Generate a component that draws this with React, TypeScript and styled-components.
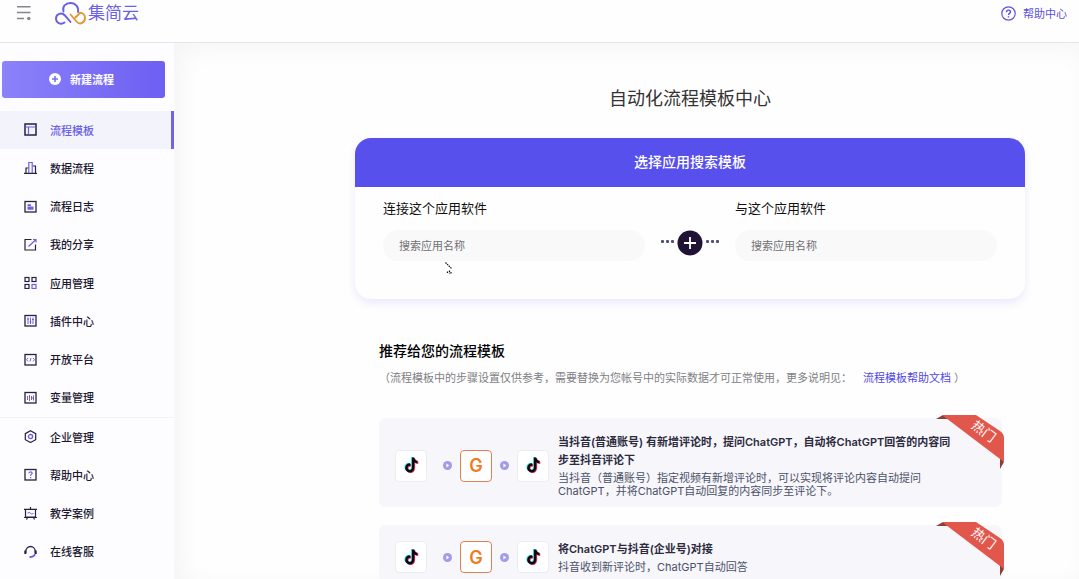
import React from 'react';
import styled, { createGlobalStyle } from 'styled-components';

const INK = '#25213f';
const VIOLET = '#6a5fe6';

const GlobalStyle = createGlobalStyle`
  *, *::before, *::after { box-sizing: border-box; }
  html, body { margin: 0; background: #fefefe; overflow: hidden; }
  body {
    font-family: Inter, "Noto Sans CJK SC", sans-serif;
    font-size: 11px;
    color: #25213f;
  }
  h1, h2, h3, p, ul, ol { margin: 0; padding: 0; }
  ul, ol { list-style: none; }
  button, input { font: inherit; }
  svg { display: block; flex: none; }
`;

const Page = styled.div`
  display: flex;
  flex-direction: column;
  height: 100vh;
`;

const Header = styled.header`
  display: flex;
  align-items: center;
  height: 43px;
  padding: 0 12px 16px 16px;
  border-bottom: 1px solid #e6e6e8;
  flex: none;
`;

const IconButton = styled.button`
  display: flex;
  padding: 0;
  border: 0;
  background: none;
  cursor: pointer;
`;

const Logo = styled.a`
  display: flex;
  align-items: center;
  gap: 2px;
  margin-left: 23px;
  font-size: 17px;
  line-height: 26px;
  font-weight: 400;
  color: ${VIOLET};
  text-decoration: none;
`;

const HelpLink = styled.a`
  display: flex;
  align-items: center;
  gap: 7px;
  margin-left: auto;
  color: #5b50e0;
  text-decoration: none;
`;

const Body = styled.div`
  display: flex;
  flex: 1;
  min-height: 0;
`;

const Sidebar = styled.aside`
  display: flex;
  flex-direction: column;
  width: 174px;
  flex: none;
  padding: 18px 0 8px;
  background: #fdfdff;
`;

const CreateButton = styled.button`
  display: flex;
  align-items: center;
  justify-content: center;
  gap: 9px;
  height: 37px;
  flex: none;
  margin: 0 9px 13px 2px;
  padding: 0 4px 1px 0;
  border: 0;
  border-radius: 3px;
  background: linear-gradient(90deg, #8c82fa, #6c5ff2);
  color: #fff;
  font-weight: 700;
  cursor: pointer;
`;

const Menu = styled.ul`
  display: flex;
  flex-direction: column;
  flex: 1;
`;

const MenuItem = styled.li<{ $divided?: boolean }>`
  display: flex;
  flex: 1;
  border-top: ${(p) => (p.$divided ? '1px solid #f3f3f6' : '0')};
`;

const MenuLink = styled.a<{ $active?: boolean }>`
  display: flex;
  align-items: center;
  gap: 13px;
  flex: 1;
  padding: 0 0 1px 24px;
  border-right: 3px solid ${(p) => (p.$active ? '#7063e6' : 'transparent')};
  background: ${(p) => (p.$active ? '#f3f3fc' : 'transparent')};
  color: ${(p) => (p.$active ? VIOLET : '#1b1830')};
  font-weight: 500;
  text-decoration: none;
`;

const Main = styled.main`
  flex: 1;
  min-width: 0;
  overflow: hidden;
  padding: 41px 54px 0 181px;
  box-shadow: inset 8px 6px 24px rgba(0, 0, 0, 0.04);
`;

const PageTitle = styled.h1`
  font-size: 18px;
  line-height: 30px;
  font-weight: 400;
  text-align: center;
  color: #333;
`;

const SearchCard = styled.section`
  margin-top: 24px;
  border-radius: 16px;
  background: #fefefe;
  box-shadow: 0 4px 8px rgba(88, 80, 236, 0.12);
`;

const SearchHead = styled.h2`
  padding-bottom: 2px;
  border-radius: 16px 16px 0 0;
  background: #5850ec;
  color: #fff;
  font-size: 14px;
  line-height: 47px;
  font-weight: 500;
  text-align: center;
`;

const SearchBody = styled.div`
  display: flex;
  align-items: flex-end;
  padding: 12px 28px 38px;
`;

const Field = styled.label`
  display: flex;
  flex-direction: column;
  gap: 12px;
  flex: 1;
  min-width: 0;
  font-size: 13px;
  line-height: 19px;
  color: #111;
`;

const FieldInput = styled.input`
  width: 100%;
  height: 31px;
  padding: 0 16px;
  border: 0;
  border-radius: 16px;
  background: #f9f9fa;
  color: #333;
  font-size: 11px;
  &::placeholder { color: #707074; opacity: 1; }
`;

const Joiner = styled.div`
  display: flex;
  align-items: center;
  justify-content: center;
  width: 90px;
  height: 37px;
  flex: none;
`;

const Recommended = styled.section`
  padding: 0 23px 0 24px;
`;

const SectionTitle = styled.h2`
  margin-top: 41px;
  font-size: 14px;
  line-height: 22px;
  font-weight: 500;
  color: #000;
`;

const Note = styled.p`
  display: flex;
  margin-top: 7px;
  line-height: 18px;
  white-space: nowrap;
  color: #808085;
`;

const NoteLink = styled.a`
  margin: 0 3px 0 11px;
  color: #5046e5;
  text-decoration: none;
`;

const TemplateList = styled.ul`
  display: flex;
  flex-direction: column;
  gap: 18px;
  margin-top: 31px;
`;

const TemplateCard = styled.li`
  position: relative;
  display: flex;
  align-items: center;
  gap: 9px;
  padding: 15px 41px 9px 16px;
  border-radius: 7px;
  background: #f6f6fb;
`;

const Apps = styled.div`
  display: flex;
  align-items: center;
  gap: 8px;
  flex: none;
`;

const AppTile = styled.div<{ $tone: string }>`
  display: flex;
  align-items: center;
  justify-content: center;
  width: 32px;
  height: 32px;
  border: 1px solid ${(p) => p.$tone};
  border-radius: 4px;
  background: #fff;
  color: #f07a1c;
  font-family: Inter, sans-serif;
  font-size: 18px;
  font-weight: 600;
`;

const FirstTile = styled(AppTile)`
  margin-right: 8px;
`;

const TemplateText = styled.div`
  display: flex;
  flex-direction: column;
  gap: 3px;
  flex: 1;
  min-width: 0;
`;

const TemplateTitle = styled.h3`
  font-size: 11px;
  line-height: 18px;
  font-weight: 600;
  color: #2c2a3c;
`;

const TemplateDesc = styled.p`
  line-height: 13px;
  color: #4d5268;
`;

const Ribbon = styled.div`
  position: absolute;
  top: -3px;
  right: -2px;
  width: 68px;
  height: 54px;
`;

const RibbonText = styled.span`
  position: absolute;
  top: 8px;
  left: 35px;
  font-size: 13px;
  line-height: 16px;
  color: #fff;
  transform: rotate(37deg);
`;

const Pointer = styled.svg`
  position: absolute;
  left: 445px;
  top: 262px;
`;

function TikTok() {
  const note =
    'M12.5 2h3.1c.2 2.3 1.6 3.9 4 4.1v3.1c-1.5 0-2.8-.5-4-1.3v6.6c0 4-2.6 6.3-5.8 6.3A5.8 5.8 0 0 1 4 15c0-3.500 2.900-6 6.500-5.700v3.200c-1.900-.4-3.300.7-3.300 2.400a2.600 2.600 0 0 0 2.700 2.700c1.600 0 2.600-1.100 2.600-3z';
  return (
    <svg width="19" height="19" viewBox="0 0 24 24">
      <path d={note} fill="#35e0e2" transform="translate(-1 -.8)" />
      <path d={note} fill="#f0355a" transform="translate(1 .8)" />
      <path d={note} fill="#0b0b12" />
    </svg>
  );
}

function Arrow() {
  return (
    <svg width="9" height="9" viewBox="0 0 9 9">
      <circle cx="4.5" cy="4.5" r="4.5" fill="#a39be8" />
      <path d="M3.400 2.600 6.300 4.500 3.400 6.400z" fill="#fff" />
    </svg>
  );
}

const frame = <rect x="1" y="1.500" width="11" height="10.500" stroke={INK} strokeWidth="1.300" />;

const icons: Record<string, React.ReactNode> = {
  template: (
    <>
      <rect x="1" y="1" width="11" height="11" stroke={INK} strokeWidth="1.500" />
      <path d="M1.500 4h10M4.500 4v7.500" stroke={VIOLET} strokeWidth="1.200" />
    </>
  ),
  chart: (
    <>
      <path d="M2 12V7h2.500M9 5h2.500v7M0 12.300h13" stroke={INK} strokeWidth="1.200" />
      <path d="M4.800 12V1.500h3.400V12" stroke={VIOLET} strokeWidth="1.200" />
    </>
  ),
  log: (
    <>
      {frame}
      <path d="M3.500 5.200h3.500M3.500 7.300h6M3.500 8.800h6" stroke={VIOLET} strokeWidth="1.800" />
    </>
  ),
  share: (
    <>
      <path d="M7.500 1.500H1v10.500h10.500V6.500" stroke={INK} strokeWidth="1.200" />
      <path d="M4.500 8.500 11.500 2M9 1.500h3v3" stroke={VIOLET} strokeWidth="1.200" />
    </>
  ),
  apps: (
    <>
      <rect x="1" y="1.500" width="4" height="4" stroke={INK} strokeWidth="1.200" />
      <rect x="8" y="1.500" width="4" height="4" stroke={INK} strokeWidth="1.200" />
      <rect x="1" y="8.500" width="4" height="4" stroke={INK} strokeWidth="1.200" />
      <rect x="8" y="8.500" width="4" height="4" stroke={VIOLET} strokeWidth="1.200" />
    </>
  ),
  plugin: (
    <>
      {frame}
      <path d="M4 3.500v6.500M6.500 3.500v6.500M9 3.500v6.500M3 5h2M5.500 8h2M8 5.500h2" stroke={VIOLET} />
    </>
  ),
  platform: (
    <>
      {frame}
      <path d="M4 5 2.500 6.700 4 8.400M9 5l1.500 1.700L9 8.400M7 5 6 8.400" stroke={VIOLET} />
    </>
  ),
  variable: (
    <>
      {frame}
      <path d="M3.500 5v4M5.500 4v6M7.500 5v4M9.500 4.500v5M7.500 7h2" stroke={VIOLET} />
    </>
  ),
  company: (
    <>
      <path d="m6.500.800 5.200 2.900v6L6.500 12.500 1.300 9.700v-6z" stroke={INK} strokeWidth="1.200" />
      <circle cx="6.500" cy="6.600" r="2.100" stroke={VIOLET} strokeWidth="1.300" />
    </>
  ),
  help: (
    <>
      {frame}
      <path d="M5 5.300C5 3.300 8.200 3.400 8.200 5.200 8.200 6.300 6.600 6.400 6.600 7.800M6.600 9v1.200" stroke={VIOLET} strokeWidth="1.200" />
    </>
  ),
  cases: (
    <>
      <path d="M6.500 0v2M0 2.300h13M1.500 2.500v7.500h10V2.500M0 10.500h13M3.500 10.500 2.500 12.500M9.500 10.500l1 2" stroke={INK} strokeWidth="1.200" />
      <path d="m3.500 6 2-.5L7.500 7l2-.5" stroke={VIOLET} />
    </>
  ),
  service: (
    <>
      <path d="M1.800 8V6.200a4.700 4.700 0 0 1 9.400 0V8" stroke={INK} strokeWidth="1.300" />
      <path d="M1.300 5.500v3.500M11.700 5.500v3.500" stroke={INK} strokeWidth="2" />
      <path d="M11 9c-.5 2-2 3-5.500 3" stroke={VIOLET} strokeWidth="1.800" />
    </>
  ),
};

const menu = [
  { icon: 'template', label: '流程模板', active: true },
  { icon: 'chart', label: '数据流程' },
  { icon: 'log', label: '流程日志' },
  { icon: 'share', label: '我的分享' },
  { icon: 'apps', label: '应用管理' },
  { icon: 'plugin', label: '插件中心' },
  { icon: 'platform', label: '开放平台' },
  { icon: 'variable', label: '变量管理' },
  { icon: 'company', label: '企业管理', divided: true },
  { icon: 'help', label: '帮助中心' },
  { icon: 'cases', label: '教学案例' },
  { icon: 'service', label: '在线客服' },
];

const templates = [
  {
    title: '当抖音(普通账号) 有新增评论时，提问ChatGPT，自动将ChatGPT回答的内容同步至抖音评论下',
    desc: '当抖音（普通账号）指定视频有新增评论时，可以实现将评论内容自动提问ChatGPT，并将ChatGPT自动回复的内容同步至评论下。',
  },
  {
    title: '将ChatGPT与抖音(企业号)对接',
    desc: '抖音收到新评论时，ChatGPT自动回答',
  },
];

export default function App() {
  return (
    <Page lang="zh-CN">
      <GlobalStyle />
      <Header>
        <IconButton type="button" aria-label="菜单">
          <svg width="16" height="16" viewBox="0 0 16 16" fill="none" stroke="#85858a" strokeWidth="1.600">
            <path d="M1 1.800h13.500M1 7.500h13.500M1 13.500h7" />
            <circle cx="12.800" cy="13.500" r="1.700" fill="#85858a" stroke="none" />
          </svg>
        </IconButton>
        <Logo href="#">
          <svg width="31" height="24" viewBox="0 0 31 24" fill="none" strokeWidth="1.900" strokeLinecap="round">
            <path d="M8.500 10.500C7 5.500 10.500 2 15.500 2s8.500 4 7.500 9" stroke={VIOLET} />
            <path d="M9.500 21.500C5.500 24.500 1 21.500 1 17.500 1 13 6.500 10.500 10 14.500L15.500 21" stroke={VIOLET} />
            <path d="M15.500 13.500 21.500 20.500c3.500 4 8.500 1 8.500-3.500 0-3-2.200-5.200-5-5.200L20.500 16.500" stroke="#e8962e" />
          </svg>
          集简云
        </Logo>
        <HelpLink href="#">
          <svg width="15" height="15" viewBox="0 0 15 15" fill="none" stroke="#5b50e0" strokeWidth="1.200">
            <circle cx="7.500" cy="7.500" r="6.700" />
            <path d="M5.500 6.200c0-2.800 4-2.600 4-.3C9.500 7.400 7.500 7.400 7.500 9M7.500 10.300v1.300" strokeWidth="1.400" />
          </svg>
          帮助中心
        </HelpLink>
      </Header>
      <Body>
        <Sidebar>
          <CreateButton type="button">
            <svg width="12" height="12" viewBox="0 0 12 12">
              <circle cx="6" cy="6" r="6" fill="#fff" />
              <path d="M3 6h6M6 3v6" stroke="#7a6ff5" strokeWidth="1.600" />
            </svg>
            新建流程
          </CreateButton>
          <Menu>
            {menu.map((m) => (
              <MenuItem key={m.label} $divided={m.divided}>
                <MenuLink href="#" $active={m.active}>
                  <svg width="13" height="13" viewBox="0 0 13 13" fill="none">
                    {icons[m.icon]}
                  </svg>
                  {m.label}
                </MenuLink>
              </MenuItem>
            ))}
          </Menu>
        </Sidebar>
        <Main>
          <PageTitle>自动化流程模板中心</PageTitle>
          <SearchCard>
            <SearchHead>选择应用搜索模板</SearchHead>
            <SearchBody>
              <Field>
                连接这个应用软件
                <FieldInput type="text" placeholder="搜索应用名称" />
              </Field>
              <Joiner>
                <svg width="60" height="26" viewBox="0 0 60 26">
                  <g fill="#4d5078">
                    {[2.5, 7.5, 12.5, 47.5, 52.5, 57.5].map((x) => (
                      <rect key={x} x={x - 1.5} y="10" width="3" height="3" rx="1" />
                    ))}
                  </g>
                  <circle cx="30" cy="13" r="12.500" fill="#1f1235" />
                  <path d="M24 13h12M30 7v12" stroke="#fff" strokeWidth="1.800" />
                </svg>
              </Joiner>
              <Field>
                与这个应用软件
                <FieldInput type="text" placeholder="搜索应用名称" />
              </Field>
            </SearchBody>
          </SearchCard>
          <Recommended>
            <SectionTitle>推荐给您的流程模板</SectionTitle>
            <Note>
              （流程模板中的步骤设置仅供参考，需要替换为您帐号中的实际数据才可正常使用，更多说明见：
              <NoteLink href="#">流程模板帮助文档</NoteLink>）
            </Note>
            <TemplateList>
              {templates.map((t) => (
                <TemplateCard key={t.title}>
                  <Apps>
                    <FirstTile $tone="#ececf2"><TikTok /></FirstTile>
                    <Arrow />
                    <AppTile $tone="#e08050">G</AppTile>
                    <Arrow />
                    <AppTile $tone="#ececf2"><TikTok /></AppTile>
                  </Apps>
                  <TemplateText>
                    <TemplateTitle>{t.title}</TemplateTitle>
                    <TemplateDesc>{t.desc}</TemplateDesc>
                  </TemplateText>
                  <Ribbon>
                    <svg width="68" height="54" viewBox="0 0 68 54">
                      <path d="M0 4 7 0l9 4zM64 42v12l4-7z" fill="#8c3f36" />
                      <path d="M6 0h34l24 16q4 3 4 7v24z" fill="#e2574c" />
                    </svg>
                    <RibbonText>热门</RibbonText>
                  </Ribbon>
                </TemplateCard>
              ))}
            </TemplateList>
          </Recommended>
        </Main>
      </Body>
      <Pointer width="8" height="13" viewBox="0 0 8 13" fill="none">
        <path d="M.5.5v10l2.300-2 1.500 3.500 1.700-.8-1.500-3.200h3z" fill="#fff" />
        <path d="M.5.5l6.500 6.500M2.500 9.500v2M4.500 8.500v3M6 10v2" stroke="#111" strokeWidth="1.200" strokeDasharray="1.500 .8" />
      </Pointer>
    </Page>
  );
}
